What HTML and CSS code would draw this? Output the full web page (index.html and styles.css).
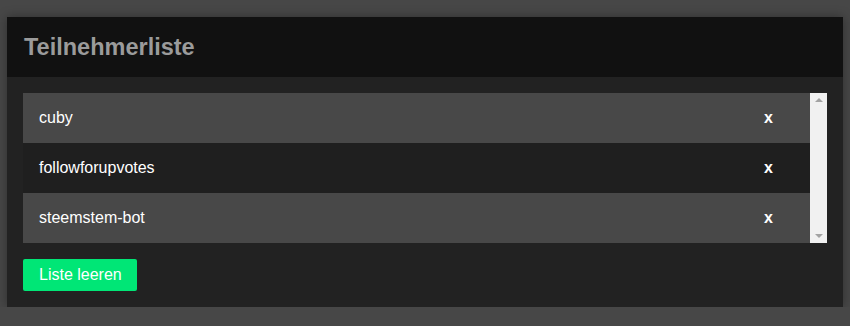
FILE: index.html
```html
<!DOCTYPE html>
<html lang="de">
<head>
<meta charset="utf-8">
<title>Teilnehmerliste</title>
<link rel="stylesheet" href="styles.css">
</head>
<body>
<div class="card">
  <div class="card-header">
    <h2 class="title">Teilnehmerliste</h2>
  </div>
  <div class="card-body">
    <div class="list-box">
      <ul class="list">
        <li class="row odd"><span class="name">cuby</span><span class="remove">x</span></li>
        <li class="row even"><span class="name">followforupvotes</span><span class="remove">x</span></li>
        <li class="row odd"><span class="name">steemstem-bot</span><span class="remove">x</span></li>
      </ul>
      <div class="scrollbar">
        <span class="arrow up"></span>
        <span class="arrow down"></span>
      </div>
    </div>
    <button class="btn" type="button">Liste leeren</button>
  </div>
</div>
</body>
</html>
```
FILE: styles.css
```css
html, body {
  margin: 0;
  padding: 0;
}
body {
  background: #474747;
  font-family: "Liberation Sans", Arial, sans-serif;
  padding: 17px 7px 0 7px;
}
.card {
  width: 836px;
  background: #222222;
  box-shadow: 0 0 10px rgba(0, 0, 0, 0.35);
}
.card-header {
  height: 60px;
  background: #111111;
  display: flex;
  align-items: center;
  padding-left: 17px;
}
.title {
  margin: 0;
  font-size: 23.5px;
  font-weight: bold;
  color: #9b9b9b;
}
.card-body {
  padding: 16px;
  display: flex;
  flex-direction: column;
  align-items: flex-start;
  gap: 16px;
}
.list-box {
  display: flex;
  width: 804px;
  height: 150px;
}
.list {
  list-style: none;
  margin: 0;
  padding: 0;
  flex: 1;
}
.row {
  height: 50px;
  display: flex;
  align-items: center;
  justify-content: space-between;
  padding: 0 37px 0 16px;
  color: #ffffff;
  font-size: 16px;
}
.row.odd {
  background: #484848;
}
.row.even {
  background: #1f1f1f;
}
.remove {
  font-weight: bold;
}
.scrollbar {
  width: 17px;
  background: #f1f1f1;
  display: flex;
  flex-direction: column;
  justify-content: space-between;
  align-items: center;
  padding: 5px 0;
  box-sizing: border-box;
}
.arrow {
  width: 0;
  height: 0;
  border-left: 4px solid transparent;
  border-right: 4px solid transparent;
}
.arrow.up {
  border-bottom: 4px solid #a3a3a3;
}
.arrow.down {
  border-top: 4px solid #a3a3a3;
}
.btn {
  background: #00e676;
  color: #ffffff;
  border: none;
  border-radius: 2px;
  height: 32px;
  padding: 0 15px 0 16px;
  font-family: "Liberation Sans", Arial, sans-serif;
  font-size: 16px;
  cursor: pointer;
}
```
